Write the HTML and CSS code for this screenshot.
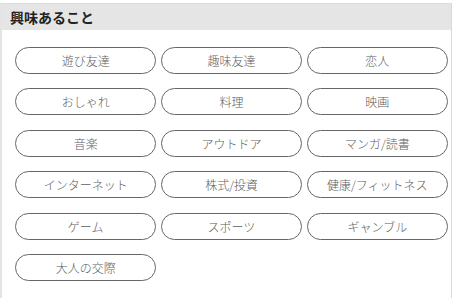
FILE: index.html
```html
<!DOCTYPE html>
<html lang="ja">
<head>
<meta charset="utf-8">
<link rel="stylesheet" href="styles.css">
</head>
<body>
<section class="panel">
  <h2 class="title">興味あること</h2>
  <ul class="tags">
    <li class="tag">遊び友達</li>
    <li class="tag">趣味友達</li>
    <li class="tag">恋人</li>
    <li class="tag">おしゃれ</li>
    <li class="tag">料理</li>
    <li class="tag">映画</li>
    <li class="tag">音楽</li>
    <li class="tag">アウトドア</li>
    <li class="tag">マンガ/読書</li>
    <li class="tag">インターネット</li>
    <li class="tag">株式/投資</li>
    <li class="tag">健康/フィットネス</li>
    <li class="tag">ゲーム</li>
    <li class="tag">スポーツ</li>
    <li class="tag">ギャンブル</li>
    <li class="tag">大人の交際</li>
  </ul>
</section>
</body>
</html>
```
FILE: styles.css
```css
html, body {
  margin: 0;
  padding: 0;
  background: #fff;
}
body {
  font-family: "Noto Sans CJK JP", "Noto Sans", sans-serif;
  height: 298px;
  overflow: hidden;
}
.panel {
  margin: 3px 1px 0 0;
  border-left: 2px solid #e4e4e4;
  border-right: 1px solid #d8d8d8;
  border-top: 1px solid #dcdcdc;
  height: 295px;
  box-sizing: border-box;
}
.title {
  margin: 0;
  height: 26px;
  background: #e5e5e5;
  font-size: 14px;
  font-weight: bold;
  color: #222;
  line-height: 26px;
  padding-left: 8px;
}
.tags {
  list-style: none;
  margin: 0;
  padding: 17px 3px 0 13px;
  display: grid;
  grid-template-columns: repeat(3, 1fr);
  column-gap: 4.5px;
  row-gap: 14.4px;
}
.tag {
  height: 27px;
  box-sizing: border-box;
  border: 1px solid #666;
  border-radius: 14px;
  display: flex;
  align-items: center;
  justify-content: center;
  font-size: 12px;
  font-weight: 300;
  color: #5e5e5e;
}
```
